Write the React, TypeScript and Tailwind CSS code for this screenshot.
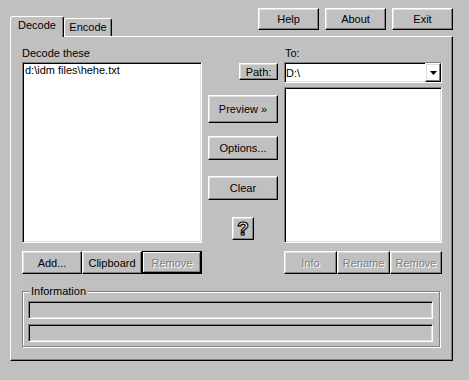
import React from "react"

// win95 style bevels
const raised =
  "border border-t-white border-l-white border-r-black border-b-black shadow-[inset_-1px_-1px_0_#808080,inset_1px_1px_0_#dfdfdf]"
const defaultRaised =
  "border border-black shadow-[inset_-1px_-1px_0_#000,inset_1px_1px_0_#fff,inset_-2px_-2px_0_#808080]"
const sunken =
  "border border-t-[#808080] border-l-[#808080] border-r-white border-b-white shadow-[inset_1px_1px_0_#000,inset_-1px_-1px_0_#dfdfdf]"

interface BtnProps {
  label: React.ReactNode
  className?: string
  disabled?: boolean
  isDefault?: boolean
}

const Btn: React.FC<BtnProps> = ({ label, className = "", disabled = false, isDefault = false }) => {
  return (
    <div
      className={`flex shrink-0 items-center justify-center bg-[#c0c0c0] ${isDefault ? defaultRaised : raised} ${className}`}
    >
      <span className={disabled ? "text-[#808080] [text-shadow:1px_1px_0_#fff]" : "text-black"}>{label}</span>
    </div>
  )
}

const App: React.FC = () => {
  return (
    <div className="h-[380px] w-[469px] select-none overflow-hidden bg-[#c0c0c0] font-['Liberation_Sans',Arial,sans-serif] text-[11px] leading-[14px] text-black">
      {/* tabs + top buttons */}
      <div className="flex h-[36px] justify-between pl-[10px] pr-[16px]">
        <div className="relative z-10 -mb-[1px] flex items-end self-end">
          <div className="h-[21px] w-[54px] rounded-t-[3px] border-t border-l border-r border-t-white border-l-white border-r-black bg-[#c0c0c0] pt-[1px] text-center shadow-[inset_-1px_0_0_#808080]">
            Decode
          </div>
          <div className="mb-[1px] h-[18px] w-[48px] rounded-t-[3px] border-t border-l border-r border-t-white border-l-white border-r-black bg-[#c0c0c0] pt-[1px] text-center shadow-[inset_-1px_0_0_#808080]">
            Encode
          </div>
        </div>
        <div className="flex gap-[6px] pt-[8px]">
          <Btn label="Help" className="h-[22px] w-[61px]" />
          <Btn label="About" className="h-[22px] w-[61px]" />
          <Btn label="Exit" className="h-[22px] w-[61px]" />
        </div>
      </div>

      {/* tab page */}
      <div className="ml-[10px] flex h-[325px] w-[443px] flex-col border border-t-white border-l-white border-r-black border-b-black shadow-[inset_-1px_-1px_0_#808080]">
        <div className="flex pl-[11px]">
          {/* left column */}
          <div className="flex w-[180px] flex-col pt-[9px]">
            <div className="h-[14px]">Decode these</div>
            <div className={`mt-[2px] h-[181px] bg-white pl-[2px] ${sunken}`}>d:\idm files\hehe.txt</div>
            <div className="mt-[8px] flex">
              <Btn label="Add..." className="h-[23px] w-[60px]" />
              <Btn label="Clipboard" className="h-[23px] w-[60px]" />
              <Btn label="Remove" disabled isDefault className="h-[23px] w-[60px]" />
            </div>
          </div>

          {/* middle column */}
          <div className="ml-[6px] flex w-[70px] flex-col items-end">
            <Btn label="Path:" className="mt-[26px] h-[17px] w-[39px]" />
            <Btn label="Preview »" className="mt-[15px] h-[28px] w-[70px]" />
            <Btn label="Options..." className="mt-[13px] h-[24px] w-[70px]" />
            <Btn label="Clear" className="mt-[16px] h-[24px] w-[70px]" />
            <Btn
              label={
                <span className="text-[19px] font-bold leading-[19px] text-white [-webkit-text-stroke:1.2px_#000]">?</span>
              }
              className="mt-[17px] h-[23px] w-[22px] self-center"
            />
          </div>

          {/* right column */}
          <div className="ml-[6px] flex w-[158px] flex-col pt-[9px]">
            <div className="h-[14px] pl-[1px]">To:</div>
            <div className={`mt-[2px] flex h-[21px] items-center bg-white ${sunken}`}>
              <span className="flex-1 pl-[1px]">D:\</span>
              <div className={`flex h-full w-[16px] items-center justify-center ${raised}`}>
                <svg width="7" height="4" viewBox="0 0 7 4">
                  <polygon points="0,0 7,0 3.5,4" fill="#000" />
                </svg>
              </div>
            </div>
            <div className={`mt-[4px] h-[156px] bg-white ${sunken}`} />
            <div className="mt-[8px] flex">
              <Btn label="Info" disabled className="h-[23px] w-[53px]" />
              <Btn label="Rename" disabled className="h-[23px] w-[53px]" />
              <Btn label="Remove" disabled className="h-[23px] w-[52px]" />
            </div>
          </div>
        </div>

        {/* information group */}
        <div className="ml-[11px] mt-[17px] flex h-[56px] w-[418px] flex-col border border-[#808080] shadow-[inset_1px_1px_0_#fff,1px_1px_0_#fff]">
          <div className="-mt-[8px] ml-[6px] h-[14px] w-fit bg-[#c0c0c0] px-[2px]">Information</div>
          <div className={`ml-[5px] mt-[3px] h-[18px] w-[405px] ${sunken}`} />
          <div className={`ml-[5px] mt-[5px] h-[18px] w-[405px] ${sunken}`} />
        </div>
      </div>
    </div>
  )
}

export default App
